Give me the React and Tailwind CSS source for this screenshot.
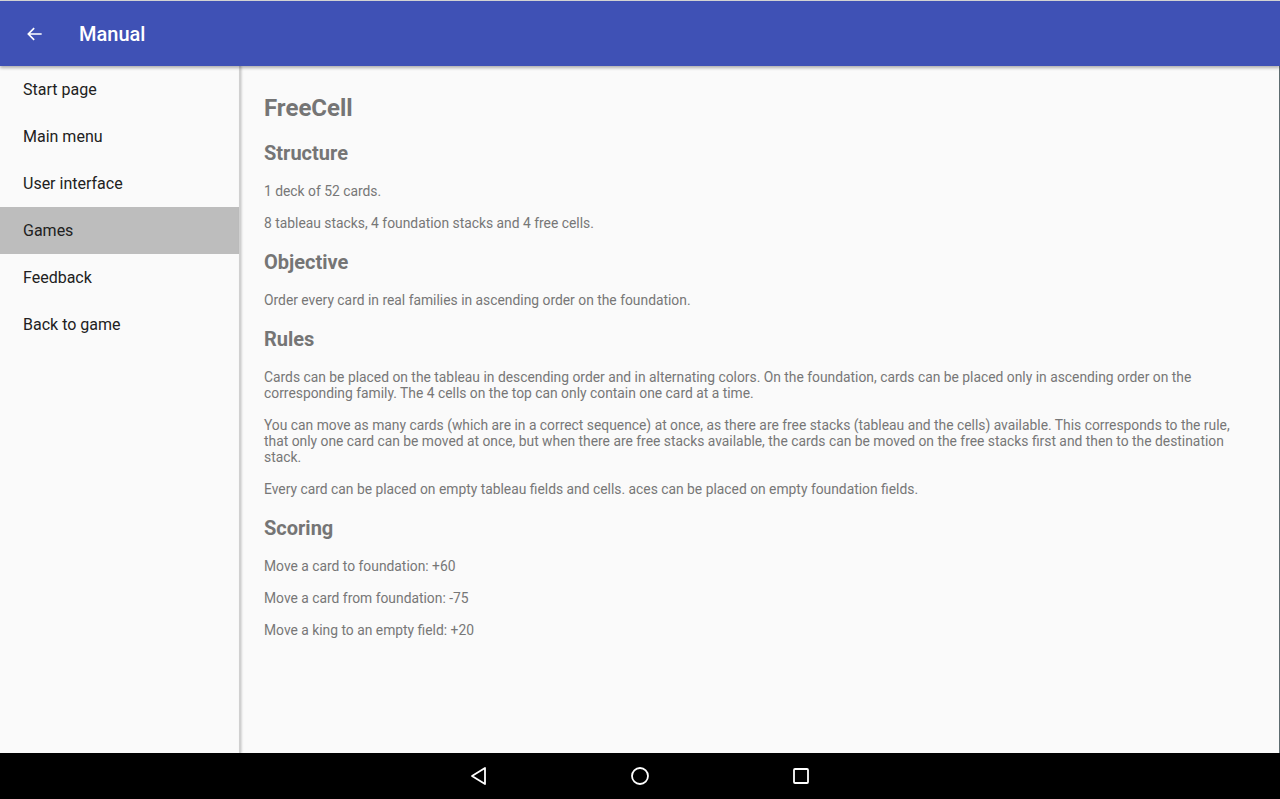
const menu = ['Start page', 'Main menu', 'User interface', 'Games', 'Feedback', 'Back to game'];

function Para({ children, first }) {
  return (
    <p className={`${first ? 'mt-[18px]' : 'mt-4'} text-[13.85px] leading-4 text-[#777777]`}>{children}</p>
  );
}

function H2({ children }) {
  return <h2 className="mt-[19px] text-[20px] leading-6 font-bold text-[#757575]">{children}</h2>;
}

export default function App() {
  return (
    <div
      className="w-[1280px] h-[799px] flex flex-col bg-[#fafafa] overflow-hidden"
      style={{ fontFamily: 'Roboto, "Noto Sans", sans-serif' }}
    >
      <div className="h-px bg-[#d6d6d6]" />
      {/* App bar */}
      <div className="relative z-10 h-[65px] flex items-center bg-[#3f51b5] shadow-[0_2px_3px_rgba(0,0,0,0.3)]">
        <div className="w-[79px] pl-[25px] flex items-center">
          <svg width="20" height="20" viewBox="0 0 24 24" fill="none">
            <path d="M20 12H4M11 5l-7 7 7 7" stroke="#fff" strokeWidth="2" />
          </svg>
        </div>
        <span className="text-[20px] font-medium text-white">Manual</span>
      </div>

      <div className="flex-1 flex min-h-0 border-r border-[#5e6c70]">
        {/* Sidebar */}
        <div className="w-[239px] flex flex-col bg-[#fafafa]">
          {menu.map((m) => (
            <div
              key={m}
              className={`h-[47px] flex items-center pl-[23px] text-[16px] text-[#212121] ${m === 'Games' ? 'bg-[#bdbdbd]' : ''}`}
            >
              {m}
            </div>
          ))}
        </div>
        <div className="w-[2px] bg-[#d0d0d0] shadow-[1px_0_2px_rgba(0,0,0,0.15)]" />

        {/* Content */}
        <div className="flex-1 pl-[23px] pr-6 pt-[28px]">
          <h1 className="text-[24px] leading-7 font-bold text-[#757575]">FreeCell</h1>
          <h2 className="mt-[19px] text-[20px] leading-6 font-bold text-[#757575]">Structure</h2>
          <Para first>1 deck of 52 cards.</Para>
          <Para>8 tableau stacks, 4 foundation stacks and 4 free cells.</Para>
          <H2>Objective</H2>
          <Para first>Order every card in real families in ascending order on the foundation.</Para>
          <H2>Rules</H2>
          <Para first>
            Cards can be placed on the tableau in descending order and in alternating colors. On the foundation, cards can be placed only in ascending order on the corresponding family. The 4 cells on the top can only contain one card at a time.
          </Para>
          <Para>
            You can move as many cards (which are in a correct sequence) at once, as there are free stacks (tableau and the cells) available. This corresponds to the rule, that only one card can be moved at once, but when there are free stacks available, the cards can be moved on the free stacks first and then to the destination stack.
          </Para>
          <Para>Every card can be placed on empty tableau fields and cells. aces can be placed on empty foundation fields.</Para>
          <H2>Scoring</H2>
          <Para first>Move a card to foundation: +60</Para>
          <Para>Move a card from foundation: -75</Para>
          <Para>Move a king to an empty field: +20</Para>
        </div>
      </div>

      {/* Navigation bar */}
      <div className="h-[46px] bg-black flex items-center justify-center gap-[141px]">
        <svg width="20" height="20" viewBox="0 0 20 20" fill="none">
          <path d="M16 2v16L3 10z" stroke="#fff" strokeWidth="1.8" strokeLinejoin="round" />
        </svg>
        <svg width="20" height="20" viewBox="0 0 20 20" fill="none">
          <circle cx="10" cy="10" r="8" stroke="#fff" strokeWidth="1.8" />
        </svg>
        <svg width="20" height="20" viewBox="0 0 20 20" fill="none">
          <rect x="3" y="3" width="14" height="14" rx="1" stroke="#fff" strokeWidth="1.8" />
        </svg>
      </div>
    </div>
  );
}
